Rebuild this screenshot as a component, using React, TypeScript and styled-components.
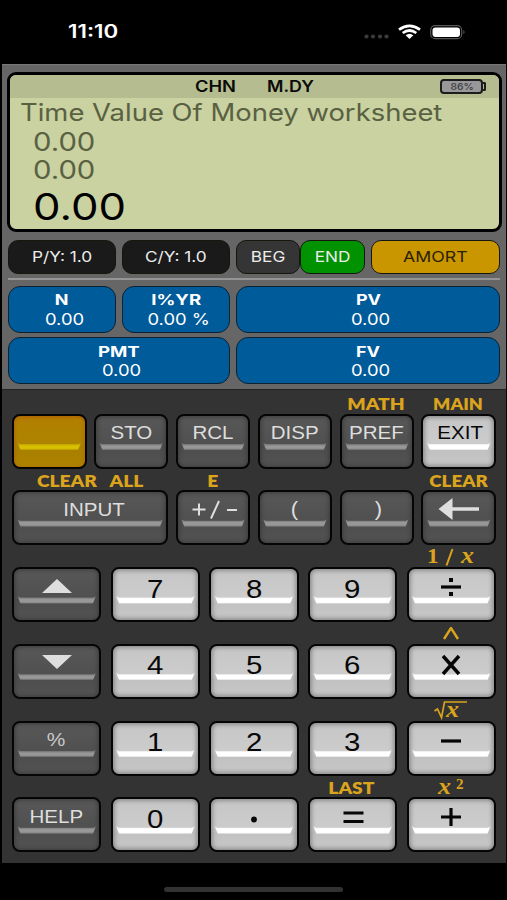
import React from "react";
import styled, { createGlobalStyle, css } from "styled-components";

const GlobalStyle = createGlobalStyle`
  * { box-sizing: border-box; }
  body { margin: 0; background: #000; }
`;

const sans = '"Inter", "Liberation Sans", sans-serif';
const keySans = '"Liberation Sans", Arial, sans-serif';
const labelSans = '"Lato", "Open Sans", sans-serif';

const Phone = styled.div`
  width: 507px;
  height: 900px;
  background: #000;
  display: flex;
  flex-direction: column;
  font-family: ${sans};
  overflow: hidden;
`;

const StatusBar = styled.header`
  height: 64px;
  flex: none;
  display: flex;
  align-items: center;
  padding: 0 41px 0 68px;
`;

/* Text drawn wider than its natural width. */
const Text = styled.span<{
  $size: number;
  $stretch?: number;
  $weight?: number;
  $color?: string;
  $origin?: string;
  $dx?: number;
}>`
  display: inline-block;
  white-space: pre;
  font-size: ${(p) => p.$size}px;
  line-height: 1;
  font-weight: ${(p) => p.$weight ?? 400};
  color: ${(p) => p.$color ?? "inherit"};
  transform: translateX(${(p) => p.$dx ?? 0}px) scaleX(${(p) => p.$stretch ?? 1.15});
  transform-origin: ${(p) => p.$origin ?? "center"};
`;

const StatusIcons = styled.div`
  margin-left: auto;
  display: flex;
  align-items: center;
`;

const AppPanel = styled.main`
  margin: 0 1px 0 2px;
  height: 799px;
  flex: none;
  background: #333;
  display: flex;
  flex-direction: column;
`;

const TopPanel = styled.section`
  height: 326px;
  flex: none;
  background: #666;
  border-top: 1px solid #777;
  border-bottom: 1px solid #222;
  padding: 6.5px 4.5px 0 5px;
`;

const Display = styled.div`
  height: 160px;
  border: 3px solid #000;
  border-radius: 9px;
  background: #c9d2a0;
  overflow: hidden;
`;

const Annunciators = styled.div`
  height: 23.5px;
  background: #b5bc90;
  display: flex;
  align-items: center;
  padding: 0 13px 0 185px;
  gap: 37px;
  color: #0a0a08;
`;

const BatteryIcon = styled.div`
  margin-left: auto;
  display: flex;
  align-items: center;
`;

const BatteryBody = styled.div`
  width: 43px;
  height: 15px;
  border: 2px solid #1c1d1a;
  border-radius: 4px;
  background: #98989a;
  display: flex;
  align-items: center;
  justify-content: center;
  padding-left: 3px;
`;

const BatteryTip = styled.div`
  width: 3px;
  height: 9px;
  border: 2px solid #1c1d1a;
  border-left: 0;
  border-radius: 0 2px 2px 0;
`;

const Lines = styled.div`
  display: flex;
  flex-direction: column;
  align-items: flex-start;
`;

const Line = styled.div<{ $h: number; $indent: number }>`
  height: ${(p) => p.$h}px;
  padding-left: ${(p) => p.$indent}px;
  display: flex;
  align-items: center;
`;

const PillRow = styled.div`
  display: flex;
  height: 34px;
  margin: 8px 1px 0 1px;
`;

const Pill = styled.button<{ $w: number; $bg: string; $fg?: string; $gap?: number }>`
  width: ${(p) => p.$w}px;
  margin: 0 ${(p) => p.$gap ?? 0}px 0 0;
  flex: none;
  padding: 0;
  border: 1px solid #15170f;
  border-radius: 10px;
  background: ${(p) => p.$bg};
  color: ${(p) => p.$fg ?? "#ececec"};
  font-family: ${sans};
  display: flex;
  align-items: center;
  justify-content: center;
`;

const Divider = styled.div`
  height: 2px;
  margin: 4.5px 1.5px 5.5px 1px;
  background: #959595;
`;

const Registers = styled.div`
  display: grid;
  grid-template-columns: 107.7px 107.7px 264px;
  grid-auto-rows: 47px;
  gap: 4.5px 6.3px;
  margin: 0 1px;
`;

const Register = styled.button<{ $span?: number }>`
  grid-column: span ${(p) => p.$span ?? 1};
  padding: 1px 0 0;
  border: 1px solid #0c2233;
  border-radius: 12px;
  background: #005b9a;
  color: #fff;
  font-family: ${sans};
  display: flex;
  flex-direction: column;
  align-items: center;
  justify-content: center;
  gap: 3.5px;
`;

const Keypad = styled.section`
  padding: 2px 10px 0;
`;

const KeyRow = styled.div<{ $columns: string; $gap: number }>`
  height: 76.75px;
  display: grid;
  grid-template-columns: ${(p) => p.$columns};
  column-gap: ${(p) => p.$gap}px;
`;

const Cell = styled.div<{ $span?: number }>`
  grid-column: span ${(p) => p.$span ?? 1};
  display: flex;
  flex-direction: column;
`;

const Shifted = styled.div`
  height: 21.5px;
  flex: none;
  display: flex;
  align-items: center;
  justify-content: center;
  padding-top: 1px;
  color: #dba41c;
  font-family: ${labelSans};
`;

const MathSvg = styled.svg`
  display: block;
  overflow: visible;
`;

type Tone = "dark" | "light" | "gold";

const tones = {
  dark: css`
    background: linear-gradient(#585858, #505050 55%, #4d4d4d 60%, #535353);
    box-shadow: inset 0 0 4px 1px #3c3c3c;
    color: #dedede;
  `,
  light: css`
    background: linear-gradient(#c6c6c6, #cccccc 55%, #c1c1c1 66%, #c8c8c8);
    box-shadow: inset 0 0 4px 1.5px #858585;
    color: #080808;
  `,
  gold: css`
    background: linear-gradient(#b37f00, #ad8300 55%, #a97f00 62%, #ad8200);
    box-shadow: inset 0 1px 3px 1px #b06800;
    color: #000;
  `,
};

const ridges = {
  dark: "linear-gradient(#606060, #989898 45%, #989898 75%, #686868)",
  light: "linear-gradient(#dcdcdc, #fff 35%, #fff 80%, #e0e0e0)",
  gold: "linear-gradient(#b89200, #d8c200 45%, #d8c200 75%, #bb9800)",
};

const KeyCap = styled.button<{ $tone: Tone }>`
  height: 55px;
  flex: none;
  padding: 0 3.5px;
  border: 2.5px solid #050505;
  border-radius: 8px;
  font-family: ${keySans};
  ${(p) => tones[p.$tone]}
  display: flex;
  flex-direction: column;
  align-items: stretch;
`;

const Face = styled.span<{ $drop: number }>`
  height: 27px;
  flex: none;
  padding-top: ${(p) => p.$drop}px;
  display: flex;
  align-items: center;
  justify-content: center;
  position: relative;
  z-index: 1;
`;

const Ridge = styled.span<{ $tone: Tone }>`
  height: 7.5px;
  flex: none;
  background: ${(p) => ridges[p.$tone]};
  clip-path: polygon(0 0, 3px 1.5px, calc(100% - 3px) 1.5px, 100% 0, calc(100% - 3px) 100%, 3px 100%);
`;

const HomeArea = styled.footer`
  flex: 1;
  display: flex;
  justify-content: center;
  padding-top: 23.5px;
`;

const HomeBar = styled.div`
  width: 179px;
  height: 5px;
  border-radius: 3px;
  background: #323232;
`;

interface KeyProps {
  tone?: Tone;
  span?: number;
  shift?: React.ReactNode;
  drop?: number;
  children?: React.ReactNode;
}

function Key({ tone = "dark", span, shift, drop = 7, children }: KeyProps) {
  return (
    <Cell $span={span}>
      <Shifted>{shift}</Shifted>
      <KeyCap $tone={tone}>
        <Face $drop={drop}>{children}</Face>
        <Ridge $tone={tone} />
      </KeyCap>
    </Cell>
  );
}

const Word = ({ children, dx = 0 }: { children: string; dx?: number }) => (
  <Text $size={19} $stretch={1.08} $dx={dx}>{children}</Text>
);

const Tag = ({ children, dx = 0, stretch = 1.13 }: { children: string; dx?: number; stretch?: number }) => (
  <Text $size={17} $weight={800} $stretch={stretch} $dx={dx}>{children}</Text>
);

const Digit = ({ value }: { value: string }) => (
  <Key tone="light" drop={12}>
    <Text $size={26} $stretch={1.13}>{value}</Text>
  </Key>
);

const Symbol = ({ d, dots }: { d: string; dots?: boolean }) => (
  <svg width="24" height="22" viewBox="0 0 24 22" fill="none" stroke="#060606" strokeWidth="3.2">
    <path d={d} />
    {dots && <path d="M12 2v4M12 16v4" strokeWidth="4" />}
  </svg>
);

const serif = {
  fontFamily: '"Liberation Serif", serif',
  fontWeight: 700,
  fill: "#dba41c",
};

const six = "repeat(6, minmax(0, 1fr))";
const five = "repeat(5, minmax(0, 1fr))";

export default function App() {
  return (
    <Phone>
      <GlobalStyle />
      <StatusBar>
        <Text $size={18} $weight={600} $stretch={1.24} $color="#fff" $origin="left">11:10</Text>
        <StatusIcons>
          <svg width="103" height="20" viewBox="0 0 103 20">
            <g fill="#3b3b3b">
              <circle cx="3.5" cy="14.5" r="2.1" />
              <circle cx="10" cy="14.5" r="2.1" />
              <circle cx="17" cy="14.5" r="2.1" />
              <circle cx="23.5" cy="14.5" r="2.1" />
            </g>
            <g fill="none" stroke="#fff" strokeWidth="2.7">
              <path d="M36 7.6Q46.5 0 57 7.6" />
              <path d="M39.7 11Q46.5 6 53.3 11" />
            </g>
            <path d="M42.6 13.3Q46.5 10.3 50.4 13.3L46.5 17Z" fill="#fff" />
            <rect x="67.7" y="3.7" width="31" height="13" rx="4.5" fill="none" stroke="#585858" strokeWidth="1.2" />
            <rect x="69.5" y="5.5" width="27.5" height="9.5" rx="3" fill="#fff" />
            <path d="M100.5 8q2 2 0 4.5z" fill="#666" />
          </svg>
        </StatusIcons>
      </StatusBar>

      <AppPanel>
        <TopPanel>
          <Display>
            <Annunciators>
              <Text $size={15.5} $weight={600} $stretch={1.18} $origin="left">CHN</Text>
              <Text $size={15.5} $weight={600} $stretch={1.15} $origin="left">M.DY</Text>
              <BatteryIcon>
                <BatteryBody>
                  <Text $size={9} $weight={500} $color="#3d3d3d" $stretch={1.15}>86%</Text>
                </BatteryBody>
                <BatteryTip />
              </BatteryIcon>
            </Annunciators>
            <Lines>
              <Line $h={30} $indent={10}>
                <Text $size={24} $stretch={1.143} $origin="left" $color="#5a6142">Time Value Of Money worksheet</Text>
              </Line>
              <Line $h={28} $indent={23}>
                <Text $size={25} $stretch={1.17} $origin="left" $color="#5a6142">0.00</Text>
              </Line>
              <Line $h={28} $indent={23}>
                <Text $size={25} $stretch={1.17} $origin="left" $color="#5a6142">0.00</Text>
              </Line>
              <Line $h={44.5} $indent={22.5}>
                <Text $size={37} $stretch={1.18} $origin="left" $color="#000">0.00</Text>
              </Line>
            </Lines>
          </Display>

          <PillRow>
            <Pill $w={107.7} $gap={6.3} $bg="#1a1a1a"><Text $size={15}>P/Y: 1.0</Text></Pill>
            <Pill $w={107.7} $gap={6.3} $bg="#1a1a1a"><Text $size={15}>C/Y: 1.0</Text></Pill>
            <Pill $w={64.5} $bg="#353535"><Text $size={15}>BEG</Text></Pill>
            <Pill $w={64.3} $gap={6.3} $bg="#009200"><Text $size={15}>END</Text></Pill>
            <Pill $w={129} $bg="#c99600" $fg="#2b2104"><Text $size={15} $stretch={1.18}>AMORT</Text></Pill>
          </PillRow>
          <Divider />
          <Registers>
            <Register><Text $size={15} $weight={700} $stretch={1.2}>N</Text><Text $size={16} $dx={2.5}>0.00</Text></Register>
            <Register><Text $size={15} $weight={700} $stretch={1.24}>I%YR</Text><Text $size={16} $dx={2.5}>0.00 %</Text></Register>
            <Register><Text $size={15} $weight={700} $stretch={1.2}>PV</Text><Text $size={16} $dx={2.5}>0.00</Text></Register>
            <Register $span={2}><Text $size={15} $weight={700} $stretch={1.24}>PMT</Text><Text $size={16} $dx={2.5}>0.00</Text></Register>
            <Register><Text $size={15} $weight={700} $stretch={1.2}>FV</Text><Text $size={16} $dx={2.5}>0.00</Text></Register>
          </Registers>
        </TopPanel>

        <Keypad>
          <KeyRow $columns={six} $gap={7.4}>
            <Key tone="gold" />
            <Key><Word>STO</Word></Key>
            <Key><Word>RCL</Word></Key>
            <Key><Word dx={-0.5}>DISP</Word></Key>
            <Key shift={<Tag dx={-0.5}>MATH</Tag>}><Word dx={-1}>PREF</Word></Key>
            <Key tone="light" shift={<Tag stretch={1.06} dx={-0.5}>MAIN</Tag>}><Word dx={1}>EXIT</Word></Key>
          </KeyRow>
          <KeyRow $columns={six} $gap={7.4}>
            <Key span={2} shift={<Tag>CLEAR   ALL</Tag>}><Word dx={3.5}>INPUT</Word></Key>
            <Key shift={<Tag>E</Tag>}>
              <svg width="48" height="22" viewBox="0 0 48 22" fill="none" stroke="#dedede" strokeWidth="2">
                <path d="M3.500 11.500h13M10 5.500v12M22 20.500L30 3M38 12h10" />
              </svg>
            </Key>
            <Key><Text $size={20} $stretch={1.1} $dx={-1}>(</Text></Key>
            <Key><Text $size={20} $stretch={1.1} $dx={1}>)</Text></Key>
            <Key shift={<Tag stretch={1.1}>CLEAR</Tag>}>
              <svg width="42" height="22" viewBox="0 0 42 22" fill="#dedede">
                <path d="M0.500 11L14.500 0v9.300h26.500v3.400H14.500V22z" />
              </svg>
            </Key>
          </KeyRow>
          <KeyRow $columns={five} $gap={9.2}>
            <Key drop={5}>
              <svg width="30" height="15" viewBox="0 0 30 15" fill="#dedede"><path d="M0 15L15 1l15 14z" /></svg>
            </Key>
            <Digit value="7" />
            <Digit value="8" />
            <Digit value="9" />
            <Key
              tone="light"
              drop={9}
              shift={
                <MathSvg width="50" height="18" viewBox="0 0 50 18">
                  <text {...serif} x="1" y="15" fontSize="20.5" textLength="11.5" lengthAdjust="spacingAndGlyphs">1</text>
                  <path d="M20.500 17.500L26.500 1" stroke="#dba41c" strokeWidth="2" />
                  <text {...serif} x="35" y="15" fontSize="24" fontStyle="italic" textLength="13" lengthAdjust="spacingAndGlyphs">x</text>
                </MathSvg>
              }
            >
              <Symbol d="M2 11h20" dots />
            </Key>
          </KeyRow>
          <KeyRow $columns={five} $gap={9.2}>
            <Key drop={5}>
              <svg width="30" height="15" viewBox="0 0 30 15" fill="#dedede"><path d="M0 1L15 15L30 1z" /></svg>
            </Key>
            <Digit value="4" />
            <Digit value="5" />
            <Digit value="6" />
            <Key
              tone="light"
              drop={11}
              shift={
                <svg width="18" height="14" viewBox="0 0 18 14" fill="none" stroke="#dba41c" strokeWidth="2.4">
                  <path d="M2 12L9 1l7 11" />
                </svg>
              }
            >
              <svg width="24" height="22" viewBox="0 0 24 22" fill="none" stroke="#060606" strokeWidth="3.4">
                <path d="M4 2L20 20M20 2L4 20" />
              </svg>
            </Key>
          </KeyRow>
          <KeyRow $columns={five} $gap={9.2}>
            <Key><Text $size={19} $stretch={1.1} $color="#c8c8c8" $dx={-0.5}>%</Text></Key>
            <Digit value="1" />
            <Digit value="2" />
            <Digit value="3" />
            <Key
              tone="light"
              drop={9}
              shift={
                <MathSvg width="34" height="18" viewBox="0 0 34 18">
                  <path d="M0.500 10l3-2l4 8.500L10.500 1H33" fill="none" stroke="#dba41c" strokeWidth="1.7" />
                  <text {...serif} x="12" y="15.500" fontSize="23" fontStyle="italic" textLength="13" lengthAdjust="spacingAndGlyphs">x</text>
                </MathSvg>
              }
            >
              <Symbol d="M2 11h20" />
            </Key>
          </KeyRow>
          <KeyRow $columns={five} $gap={9.2}>
            <Key><Word dx={-0.5}>HELP</Word></Key>
            <Digit value="0" />
            <Key tone="light" drop={12}>
              <svg width="8" height="8" viewBox="0 0 8 8"><circle cx="4" cy="4.5" r="2.9" fill="#060606" /></svg>
            </Key>
            <Key tone="light" drop={9} shift={<Tag dx={-1}>LAST</Tag>}>
              <Symbol d="M2.500 7h20M2.500 15.500h20" />
            </Key>
            <Key
              tone="light"
              drop={9}
              shift={
                <MathSvg width="30" height="18" viewBox="0 0 30 18">
                  <text {...serif} x="2" y="15.5" fontSize="23" fontStyle="italic" textLength="13" lengthAdjust="spacingAndGlyphs">x</text>
                  <text {...serif} x="20" y="10.5" fontSize="15">2</text>
                </MathSvg>
              }
            >
              <Symbol d="M2 11h20M12 2v18" />
            </Key>
          </KeyRow>
        </Keypad>
      </AppPanel>

      <HomeArea>
        <HomeBar />
      </HomeArea>
    </Phone>
  );
}
